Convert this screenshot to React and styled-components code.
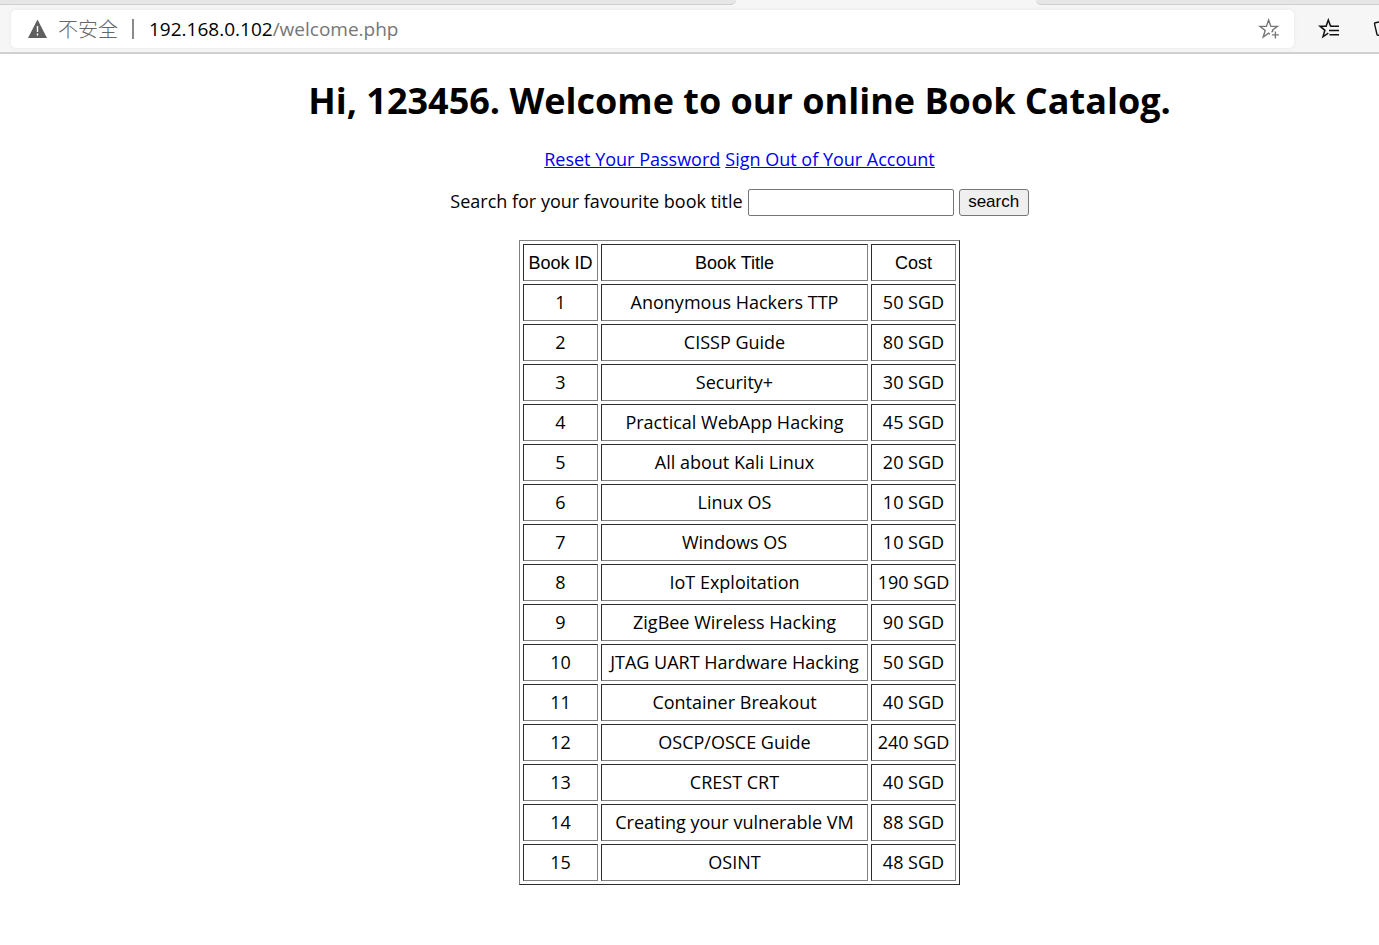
import React from "react";
import styled, { createGlobalStyle } from "styled-components";

const GlobalStyle = createGlobalStyle`
  * { box-sizing: border-box; }
  body {
    margin: 0;
    background: #fff;
    color: #000;
    font-family: "Open Sans", "Noto Sans CJK SC", sans-serif;
    font-size: 18px;
    line-height: 24px;
    overflow-x: hidden;
  }
`;

const Chrome = styled.header`
  background: #f6f6f6;
  border-bottom: 2px solid #d0d0d0;
`;

const TabStrip = styled.div`
  display: flex;
  justify-content: space-between;
  height: 5px;
`;

const TabEdge = styled.div`
  width: ${(p) => p.$width};
  background: #e6e6e6;
  border-bottom: 1px solid #cfcfcf;
  border-radius: ${(p) => (p.$side === "left" ? "0 0 5px 0" : "0 0 0 5px")};
`;

const Toolbar = styled.div`
  display: flex;
  align-items: center;
  padding: 5px 0 4px 11px;
  overflow: hidden;
`;

const AddressBar = styled.div`
  flex: 1;
  display: flex;
  align-items: center;
  height: 38px;
  padding: 0 14px 0 16px;
  background: #fff;
  border-radius: 5px;
  box-shadow: 0 0 4px #e9e9e9;
`;

const Security = styled.span`
  margin-left: 10px;
  padding-right: 14px;
  border-right: 2px solid #8a8a8a;
  font-family: "Noto Sans CJK SC", sans-serif;
  font-weight: 300;
  font-size: 20px;
  line-height: 20px;
  color: #666;
`;

const Url = styled.span`
  flex: 1;
  margin-left: 15px;
  font-size: 19px;
  color: #767676;
`;

const Host = styled.span`
  color: #000;
`;

const IconButton = styled.button`
  display: flex;
  flex: none;
  padding: 0;
  border: 0;
  background: none;
  color: ${(p) => p.$color || "#111"};
  margin-left: ${(p) => p.$gap || "0"};
`;

const Page = styled.main`
  display: flex;
  flex-direction: column;
  align-items: center;
  padding: 22px 0 24px 100px;
`;

const Title = styled.h1`
  margin: 0;
  font-size: 36px;
  line-height: 50px;
  font-weight: 700;
  white-space: nowrap;
`;

const Links = styled.nav`
  display: flex;
  gap: 5px;
  margin-top: 21px;
`;

const Link = styled.a`
  color: #0000ee;
  text-decoration: underline;
`;

const SearchForm = styled.form`
  display: flex;
  align-items: flex-start;
  gap: 5px;
  margin-top: 18px;
`;

const SearchInput = styled.input`
  width: 206px;
  height: 27px;
  padding: 1px 2px;
  border: 1px solid #767676;
  border-radius: 2px;
  font: 17px "Liberation Sans", sans-serif;
`;

const SearchButton = styled.button`
  width: 70px;
  height: 27px;
  padding: 0 0 2px;
  border: 1px solid #767676;
  border-radius: 3px;
  background: #efefef;
  color: #000;
  font: 17px "Liberation Sans", sans-serif;
`;

const BookTable = styled.table`
  margin-top: 24px;
  border: 1px solid;
  border-color: #808080 #2c2c2c #2c2c2c #808080;
  border-collapse: separate;
  border-spacing: 3px;
  text-align: center;
`;

const cell = `
  height: 37px;
  padding: 0 4px 2px;
  border: 1px solid;
  border-color: #2c2c2c #808080 #808080 #2c2c2c;
  white-space: nowrap;
`;

const HeadCell = styled.th`
  ${cell}
  min-width: ${(p) => p.$width};
  padding: 2px 4px 0;
  font: 400 18px "Liberation Sans", sans-serif;
`;

const Cell = styled.td`
  ${cell}
`;

const books = [
  ["Anonymous Hackers TTP", 50],
  ["CISSP Guide", 80],
  ["Security+", 30],
  ["Practical WebApp Hacking", 45],
  ["All about Kali Linux", 20],
  ["Linux OS", 10],
  ["Windows OS", 10],
  ["IoT Exploitation", 190],
  ["ZigBee Wireless Hacking", 90],
  ["JTAG UART Hardware Hacking", 50],
  ["Container Breakout", 40],
  ["OSCP/OSCE Guide", 240],
  ["CREST CRT", 40],
  ["Creating your vulnerable VM", 88],
  ["OSINT", 48],
];

const WarningIcon = () => (
  <svg width="21" height="21" viewBox="0 0 21 21" aria-hidden="true">
    <path d="M10.5 0.5 20 19H1Z" fill="#5f5f5f" />
    <path d="M10.5 7v6M10.5 14.5v2" stroke="#fff" strokeWidth="1.4" />
  </svg>
);

const AddFavouriteIcon = () => (
  <svg width="22" height="22" viewBox="0 0 22 22" fill="none" stroke="currentColor" strokeWidth="1.4" aria-hidden="true">
    <path d="M13.5 14.2 14.8 13 14.6 12 19.4 8.4H12.9L10.6 2 8.4 8.4H2L7.2 12.4 5.2 19 10.6 15.1 12 16.2" />
    <path d="M17.4 13.4v7M13.9 16.9h7" />
  </svg>
);

const FavouritesIcon = () => (
  <svg width="22" height="22" viewBox="0 0 22 22" fill="none" stroke="currentColor" strokeWidth="1.5" aria-hidden="true">
    <path d="M13.5 8.4 12.5 8 10.3 2 8.1 8.2H2L6.9 12.3 5 18.8 10.3 15.2" />
    <path d="M12.5 8.3H21M11 12.6H21M11.5 16.8H21" />
  </svg>
);

const CollectionsIcon = () => (
  <svg width="6" height="22" viewBox="0 0 6 22" fill="none" stroke="currentColor" strokeWidth="1.4" aria-hidden="true">
    <path d="M6 4 2.4 4.7Q1.3 5 1.6 6.1L4 16.5Q4.3 17.5 6 17.2" />
  </svg>
);

export default function App() {
  return (
    <>
      <GlobalStyle />
      <Chrome>
        <TabStrip>
          <TabEdge $side="left" $width="736px" />
          <TabEdge $side="right" $width="343px" />
        </TabStrip>
        <Toolbar>
          <AddressBar>
            <WarningIcon />
            <Security>不安全</Security>
            <Url>
              <Host>192.168.0.102</Host>/welcome.php
            </Url>
            <IconButton type="button" aria-label="Add to favourites" $color="#777">
              <AddFavouriteIcon />
            </IconButton>
          </AddressBar>
          <IconButton type="button" aria-label="Favourites" $gap="24px">
            <FavouritesIcon />
          </IconButton>
          <IconButton type="button" aria-label="Collections" $gap="33px">
            <CollectionsIcon />
          </IconButton>
        </Toolbar>
      </Chrome>
      <Page>
        <Title>Hi, 123456. Welcome to our online Book Catalog.</Title>
        <Links>
          <Link href="#reset">Reset Your Password</Link>
          <Link href="#signout">Sign Out of Your Account</Link>
        </Links>
        <SearchForm onSubmit={(e) => e.preventDefault()}>
          <label htmlFor="title">Search for your favourite book title</label>
          <SearchInput id="title" type="text" />
          <SearchButton type="submit">search</SearchButton>
        </SearchForm>
        <BookTable>
          <thead>
            <tr>
              <HeadCell scope="col" $width="75px">Book ID</HeadCell>
              <HeadCell scope="col" $width="267px">Book Title</HeadCell>
              <HeadCell scope="col" $width="85px">Cost</HeadCell>
            </tr>
          </thead>
          <tbody>
            {books.map(([title, cost], i) => (
              <tr key={title}>
                <Cell>{i + 1}</Cell>
                <Cell>{title}</Cell>
                <Cell>{cost} SGD</Cell>
              </tr>
            ))}
          </tbody>
        </BookTable>
      </Page>
    </>
  );
}
